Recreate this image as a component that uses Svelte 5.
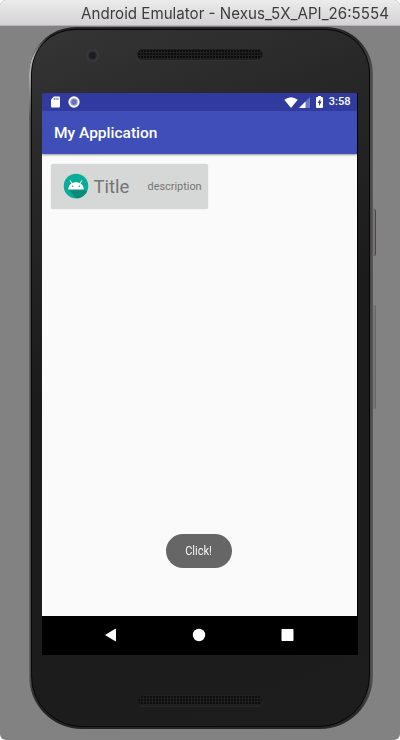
<script>
  const windowTitle = 'Android Emulator - Nexus_5X_API_26:5554';
</script>

<div class="window">
  <header class="titlebar"><span>{windowTitle}</span></header>
  <div class="desk">
    <i class="key power"></i>
    <i class="key volume"></i>
    <div class="phone">
      <div class="body">
        <div class="bezel top">
          <i class="camera"></i>
          <i class="speaker"></i>
        </div>
        <main class="screen">
          <div class="status">
            <svg class="sd" viewBox="0 0 9 12" width="9" height="12"><path d="M3 .5h5q1 0 1 1V10.500q0 1-1 1H1q-1 0-1-1V3.500z" fill="#fff"/><path d="M3.300 2v2M5.100 2v2M6.900 2v2" stroke="#737ac5" stroke-width="1.100"/></svg>
            <svg class="ring" viewBox="0 0 12 12" width="12" height="12"><circle cx="6" cy="6" r="4.700" fill="#9da2da" stroke="#fff" stroke-width="1.900"/><circle cx="6" cy="6" r="2.700" fill="#6870c2"/></svg>
            <span class="grow"></span>
            <svg class="wifi" viewBox="0 0 14 11" width="14" height="11"><path d="M.3 2.800Q7-2.200 13.700 2.800L7 11z" fill="#fff"/></svg>
            <svg class="signal" viewBox="0 0 11 11" width="11" height="11"><path d="M0 11 11 0v11z" fill="#7076c4"/><path d="M0 11 6.500 4.500V11z" fill="#fff"/></svg>
            <svg class="battery" viewBox="0 0 7 12" width="7" height="12"><path d="M2 0h3v1h1q1 0 1 1v9q0 1-1 1H1q-1 0-1-1V2q0-1 1-1h1z" fill="#fff"/><path d="M4.300 2.700 1.500 7H3v3l2.700-4.400H4.300z" fill="#303a9f"/></svg>
            <span class="clock">3:58</span>
          </div>
          <div class="appbar"><span>My Application</span></div>
          <div class="content">
            <button class="card">
              <svg class="droid" viewBox="0 0 26 26" width="26" height="26">
                <defs><clipPath id="disc"><circle cx="13" cy="13" r="12.300"/></clipPath></defs>
                <circle cx="13" cy="13" r="12.300" fill="#08ab98"/>
                <g clip-path="url(#disc)">
                  <path d="M20.500 15.500 30 25v5H17L5.500 16.500z" fill="#078878"/>
                  <path d="M0 5.500h26M0 9.500h26M0 13.500h26M0 17.500h26M0 21.500h26M5 0v26M9 0v26M13 0v26M17 0v26M21 0v26" stroke="#3bc0ad" stroke-width=".3" opacity=".45"/>
                </g>
                <path d="M9 10.500 7.200 7.700M17 10.500l1.800-2.800" fill="none" stroke="#fff" stroke-width="1" stroke-linecap="round"/>
                <path d="M5.200 16.500C5.400 6.700 20.600 6.700 20.800 16.500z" fill="#fff"/>
                <circle cx="9.600" cy="13.300" r=".7" fill="#08a391"/><circle cx="16.400" cy="13.300" r=".7" fill="#08a391"/>
              </svg>
              <span class="name">Title</span>
              <span class="desc">description</span>
            </button>
            <div class="toast"><span>Click!</span></div>
          </div>
          <nav>
            <svg viewBox="0 0 316 38" width="316" height="38" fill="#fff">
              <path d="M63 19 73.300 12.800q.7-.4.7.4v11.600q0 .8-.7.400z"/>
              <circle cx="157" cy="19" r="6.200"/>
              <rect x="239.500" y="13" width="12" height="12" rx=".8"/>
            </svg>
          </nav>
        </main>
        <div class="bezel bottom"><i class="speaker"></i></div>
      </div>
    </div>
  </div>
</div>

<style>
  :global(body) { background: #fff; }
  .window {
    width: 400px; height: 740px; box-sizing: border-box;
    display: flex; flex-direction: column; overflow: hidden;
    border-radius: 6px; background: #828282;
    font-family: Roboto, "Liberation Sans", sans-serif;
  }
  .titlebar {
    flex: none; height: 26px; box-sizing: border-box; padding-left: 81px;
    background: linear-gradient(#ececec, #d4d2d4); border-bottom: 1px solid #b5b3b5;
    color: #3c3c3c; white-space: nowrap;
    font: 15.500px/27px Inter, "Liberation Sans", sans-serif;
  }
  .titlebar span { display: inline-block; transform: scaleX(.976); transform-origin: 0 50%; }
  .desk { position: relative; flex: 1; padding: 1px 0 0 29px; }
  .key { position: absolute; left: 372px; width: 4px; box-sizing: border-box; border-radius: 0 2px 2px 0; }
  .power { top: 183px; height: 47px; background: #777475; border-right: 1px solid #494647; }
  .volume { top: 279px; height: 104px; background: #777677; border-right: 1px solid #686768; }
  .phone {
    position: relative; width: 344px; height: 702px; box-sizing: border-box; padding: 2px 3px 2px 2px;
    border-radius: 47px 47px 53px 53px;
    background: linear-gradient(90deg, #666 0, #353535 3px, #242424 12px, #282828 330px, #464445 341px, #5b595a 344px);
  }
  .phone::before {
    content: ""; position: absolute; inset: 0; border-radius: inherit;
    border-left: 2px solid #c4c4c4; border-top: 1px solid transparent;
    mask-image: linear-gradient(transparent 10px, #000 30px, #000 42px, transparent 90px);
    opacity: .85;
  }
  .body {
    height: 698px; box-sizing: border-box; padding: 0 0 0 10px;
    border: 1px solid #070707; border-radius: 44px 44px 51px 51px;
    background: linear-gradient(160deg, #353535 0, #272727 20%, #1b1b1b 45%, #1e1d1e 100%);
  }
  .bezel { display: flex; }
  .top { height: 63px; }
  .camera {
    width: 13px; height: 13px; margin: 19px 0 0 44px; border-radius: 50%;
    background: radial-gradient(circle, #1d1a22 0 28%, #2a292c 42%, #3a3a3b 60%, #343434 72%);
  }
  .speaker {
    width: 126px; height: 11px; box-sizing: border-box; border: 1px solid #202020; border-radius: 6px;
    background: radial-gradient(circle at 1px 1px, #0c0c0c .8px, #202020 1.300px) 0 0 / 3px 3px;
    box-shadow: .5px 1px 0 #303030;
  }
  .top .speaker { margin: 19px 0 0 38px; }
  .bottom .speaker { margin: 40px 0 0 95px; box-shadow: .5px 1px 0 #272727; }
  .screen { width: 316px; height: 562px; display: flex; flex-direction: column; background: #000; }
  .status {
    height: 18px; width: 315px; box-sizing: border-box; padding: 0 6.500px 0 9px;
    display: flex; align-items: center; background: #303a9f;
  }
  .status svg { display: block; flex: none; }
  .ring { margin-left: 8px; }
  .grow { flex: 1; }
  .signal { margin-left: 1px; }
  .battery { margin: 0 6px 0 6px; }
  .clock { color: #fff; font-size: 11px; line-height: 18px; font-weight: 500; }
  .appbar {
    position: relative; height: 43px; width: 315px; box-sizing: border-box; padding-left: 12px;
    background: #3f4eb8; color: #fff; font-size: 15.500px; line-height: 45px; font-weight: 500;
    box-shadow: 0 1px 2px rgba(0,0,0,.4); clip-path: inset(0 0 -4px 0);
  }
  .content {
    width: 315px; height: 462px; box-sizing: border-box; padding: 10px 0 0 8.500px;
    display: flex; flex-direction: column; align-items: flex-start; background: #fafafa;
  }
  .card {
    width: 157.500px; height: 45px; box-sizing: border-box; border: 0; border-radius: 2.500px; margin: 0;
    padding: 0 0 0 12px; display: flex; align-items: center; background: #d6d8d7;
    color: #747574; font-family: inherit; text-align: left; box-shadow: 0 0 1px #bbb;
  }
  .droid { flex: none; margin-top: -1px; }
  .name { margin-left: 5px; width: 54px; font-size: 18.500px; line-height: 24px; }
  .desc { font-size: 10.900px; line-height: 16px; }
  .toast {
    width: 66px; height: 34px; margin: 324.500px 0 0 115.500px; border-radius: 17px;
    display: flex; align-items: center; justify-content: center; background: #666;
    color: #f4f4f4; font-size: 12px;
  }
  .toast span { transform: scaleX(.92); }
  nav { height: 39px; background: #000; }
  nav svg { display: block; }
</style>
